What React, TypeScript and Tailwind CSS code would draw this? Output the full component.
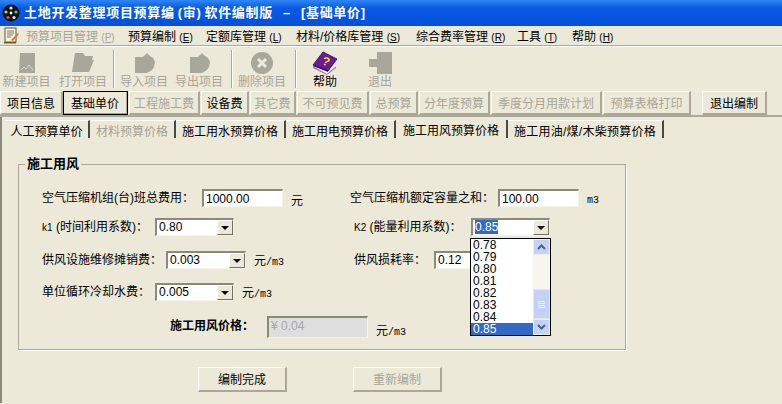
const CJK = "font-['Liberation_Sans','Noto_Sans_CJK_SC',sans-serif]";

const MENUS = [
  { label: "预算编制", key: "E", cls: "w-[78px]" },
  { label: "定额库管理", key: "L", cls: "w-[90px]" },
  { label: "材料/价格库管理", key: "S", cls: "w-[120px]" },
  { label: "综合费率管理", key: "R", cls: "w-[101px]" },
  { label: "工具", key: "T", cls: "w-[55px]" },
  { label: "帮助", key: "H", cls: "w-[50px]" },
];

const ACTIONS = [
  { label: "项目信息", cls: "w-[63px]", on: true },
  { label: "基础单价", cls: "w-[65px]", on: true, current: true },
  { label: "工程施工费", cls: "w-[71px] ml-px" },
  { label: "设备费", cls: "w-[48px] ml-px", on: true },
  { label: "其它费", cls: "w-[46px] ml-px" },
  { label: "不可预见费", cls: "w-[72px] ml-px" },
  { label: "总预算", cls: "w-[48px] ml-px" },
  { label: "分年度预算", cls: "w-[71px] ml-px" },
  { label: "季度分月用款计划", cls: "w-[111px] ml-px" },
  { label: "预算表格打印", cls: "w-[88px] ml-px" },
  { label: "退出编制", cls: "w-[65px] ml-[11px]", on: true },
];

const TABS = [
  { label: "人工预算单价", cls: "w-[85px]" },
  { label: "材料预算价格", cls: "w-[86px] text-[#a5a294]" },
  { label: "施工用水预算价格", cls: "w-[110px]" },
  { label: "施工用电预算价格", cls: "w-[110px]" },
  { label: "施工用风预算价格", cls: "w-[112px]", active: true },
  { label: "施工用油/煤/木柴预算价格", cls: "w-[156px] tracking-[0.25px]" },
];

const DROP_VALUES = ["0.78", "0.79", "0.80", "0.81", "0.82", "0.83", "0.84", "0.85"];

function ToolIcon({ name }: { name: string }) {
  const grey = "#a9a69a";
  if (name === "new")
    return (
      <svg width="18" height="20" viewBox="0 0 18 20">
        <path d="M2 0h15v20H1z" fill={grey} />
        <path d="M3 17l3-3 2 2 3-4 4 5" stroke="#d8d5c8" fill="none" />
      </svg>
    );
  if (name === "open")
    return (
      <svg width="24" height="20" viewBox="0 0 24 20">
        <path d="M4 0h8l2 3h8l-1 4H7L2 19H1z" fill={grey} />
        <path d="M6 7h17l-5 12H1z" fill={grey} />
      </svg>
    );
  if (name === "in" || name === "out")
    return (
      <svg width="21" height="21" viewBox="0 0 21 21">
        <path d="M1 4h8l1-1 3-3 3 3 3 2 2 4-1 5-2 3-5 3H1z" fill={grey} />
      </svg>
    );
  if (name === "del")
    return (
      <svg width="22" height="22" viewBox="0 0 22 22">
        <circle cx="11" cy="11" r="11" fill={grey} />
        <path d="M7 7l8 8M15 7l-8 8" stroke="#ece9d8" strokeWidth="3" />
      </svg>
    );
  if (name === "help")
    return (
      <svg width="26" height="24" viewBox="0 0 26 24">
        <path d="M1 15l14 8 9-8v2l-9 7-14-7z" fill="#8a7fa0" />
        <path d="M1 15l14 7 9-7-1-1-8 6-13-6z" fill="#ffffff" />
        <path d="M1 14L11 1l14 7-9 12-13-5z" fill="#6b1a98" stroke="#2c0a50" strokeWidth="0.8" />
        <path d="M1 15l15 6 0-2-14-5z" fill="#3a0f60" />
        <text x="10.5" y="14" fontSize="12" fontWeight="bold" fill="#f4e020" fontFamily="Liberation Sans" transform="rotate(20 13 10)">?</text>
      </svg>
    );
  return (
    <svg width="25" height="24" viewBox="0 0 25 24">
      <path d="M9 1h15v22H9v-7H1V8h8z" fill={grey} />
    </svg>
  );
}

function ToolButton({ name, label, cls, on }: { name: string; label: string; cls: string; on?: boolean }) {
  return (
    <div className={`flex flex-col items-center h-full pt-[3px] ${cls}`}>
      <div className="h-[26px] flex items-center">
        <ToolIcon name={name} />
      </div>
      <span className={`text-xs leading-[14px] -mt-px ${on ? "text-black" : "text-[#a8a598]"}`}>{label}</span>
    </div>
  );
}

function Sep({ cls }: { cls?: string }) {
  return <div className={`w-0.5 h-[38px] mt-[3px] border-l border-[#aca899] border-r border-r-white ${cls ?? ""}`} />;
}

function RaisedButton({ label, cls, on, current }: { label: string; cls: string; on?: boolean; current?: boolean }) {
  return (
    <div
      className={`h-6 flex items-center justify-center pt-0.5 text-xs border-t border-l border-t-white border-l-white border-r-2 border-b-2 border-r-[#aca899] border-b-[#aca899] ${cls} ${
        on ? "text-black" : "text-[#a8a598]"
      } ${current ? "outline outline-1 -outline-offset-1 outline-black" : ""}`}
    >
      {label}
    </div>
  );
}

function Sunken({ value, cls, disabled }: { value: string; cls: string; disabled?: boolean }) {
  return (
    <div
      className={`flex pl-0.5 pt-px text-xs leading-[15px] border-t-2 border-l-2 border-t-[#8c897c] border-l-[#8c897c] border-r border-b border-r-[#f5f3ea] border-b-[#f5f3ea] ${cls} ${
        disabled ? "bg-[#dedede] text-[#a8a8a8]" : "bg-white text-black"
      }`}
    >
      {value}
    </div>
  );
}

function Combo({ value, cls, selected }: { value: string; cls: string; selected?: boolean }) {
  return (
    <div className={`h-[18px] flex items-stretch bg-white border-t-2 border-l-2 border-t-[#8c897c] border-l-[#8c897c] border-r border-b border-r-[#f5f3ea] border-b-[#f5f3ea] ${cls}`}>
      <div className="flex-1 pl-0.5 text-xs leading-[15px]">
        <span className={selected ? "bg-[#316ac5] text-white" : "text-black"}>{value}</span>
      </div>
      <div className="w-4 flex items-center justify-center bg-[#ece9d8] border-t border-l border-t-white border-l-white border-r border-b border-r-[#716f64] border-b-[#716f64]">
        <div className="w-0 h-0 border-x-[4px] border-x-transparent border-t-[4px] border-t-black" />
      </div>
    </div>
  );
}

function ScrollBtn({ up }: { up?: boolean }) {
  return (
    <div className="h-4 bg-[#c4d2f8] border border-[#e8eefc] flex items-center justify-center">
      <svg width="9" height="6" viewBox="0 0 9 6">
        <path d={up ? "M1 5l3.5-3.5L8 5" : "M1 1l3.5 3.5L8 1"} fill="none" stroke="#4d6185" strokeWidth="2" />
      </svg>
    </div>
  );
}

function DropList() {
  return (
    <div className="absolute left-[-1px] top-[20px] z-10 w-[81px] h-[98px] bg-white border border-black flex">
      <div className="flex-1">
        {DROP_VALUES.map((v) => (
          <div
            key={v}
            className={`h-3 text-xs leading-3 pl-0.5 ${v === "0.85" ? "bg-[#316ac5] text-white" : "text-black"}`}
          >
            {v}
          </div>
        ))}
      </div>
      <div className="w-[17px] bg-[#f6f5ee] flex flex-col">
        <ScrollBtn up />
        <div className="flex-1 flex flex-col justify-end">
          <div className="h-[30px] bg-[#c4d2f8] border border-[#dfe6fb] flex flex-col items-center justify-center gap-px">
            <div className="w-[7px] h-px bg-[#eef2fe]" />
            <div className="w-[7px] h-px bg-[#eef2fe]" />
            <div className="w-[7px] h-px bg-[#eef2fe]" />
            <div className="w-[7px] h-px bg-[#eef2fe]" />
          </div>
        </div>
        <ScrollBtn />
      </div>
    </div>
  );
}

function Unit({ cjk, rest, cls }: { cjk?: string; rest?: string; cls: string }) {
  return (
    <span className={`leading-none whitespace-nowrap ${cls}`}>
      {cjk && <span className="text-xs">{cjk}</span>}
      {rest && <span className="text-[10px] font-['Liberation_Mono',monospace]">{rest}</span>}
    </span>
  );
}

export default function App() {
  return (
    <div className={`w-[782px] h-[404px] overflow-hidden bg-[#ece9d8] text-black ${CJK}`}>
      <div className="h-[26px] flex items-center bg-gradient-to-b from-[#2f86f5] via-[#0a5ae6] via-30% to-[#0450d8] pl-0.5">
        <svg width="18" height="18" viewBox="0 0 18 18">
          <circle cx="9" cy="9" r="8.5" fill="#10141c" />
          <circle cx="9" cy="4" r="1.6" fill="#e8e4c0" />
          <circle cx="14" cy="8" r="1.6" fill="#5ccf6a" />
          <circle cx="12" cy="13.5" r="1.6" fill="#e8e4c0" />
          <circle cx="6" cy="13.5" r="1.6" fill="#e05050" />
          <circle cx="4" cy="8" r="1.6" fill="#e8c040" />
          <circle cx="9" cy="9" r="1.4" fill="#ffffff" />
        </svg>
        <span className="ml-1 text-[13px] font-bold text-white tracking-[0.7px] whitespace-nowrap">
          土地开发整理项目预算编<span className="mx-[3px]">(审)</span>软件编制版
          <span className="ml-[10px]">–</span>
          <span className="ml-[10px]">[基础单价]</span>
        </span>
      </div>

      <div className="h-5 flex items-center pt-0.5 text-xs border-b border-b-[#aca899]">
        <svg className="ml-1 shrink-0 -mt-0.5" width="16" height="17" viewBox="0 0 16 17">
          <rect x="1" y="1" width="11" height="14" fill="#fbf6d8" stroke="#555" />
          <path d="M3 4h7M3 6h7M3 8h6M3 10h4" stroke="#777" />
          <path d="M7 13l7-7 1 1-6 7z" fill="#e07020" />
          <path d="M0 15h12v1.5H0z" fill="#7a5a20" />
        </svg>
        <span className="ml-1.5 w-[102px] text-[#a8a598] whitespace-nowrap">
          预算项目管理 <span className="text-[10px]">(<span className="underline">P</span>)</span>
        </span>
        {MENUS.map((m) => (
          <span key={m.key} className={`whitespace-nowrap ${m.cls}`}>
            {m.label} <span className="text-[10px]">(<span className="underline">{m.key}</span>)</span>
          </span>
        ))}
      </div>

      <div className="h-[44px] flex border-t border-t-white">
        <ToolButton name="new" label="新建项目" cls="w-[53px]" />
        <ToolButton name="open" label="打开项目" cls="w-[60px]" />
        <Sep />
        <ToolButton name="in" label="导入项目" cls="w-[56px] ml-px" />
        <ToolButton name="out" label="导出项目" cls="w-[54px]" />
        <Sep cls="ml-[5px]" />
        <ToolButton name="del" label="删除项目" cls="w-[58px]" />
        <Sep cls="ml-1" />
        <ToolButton name="help" label="帮助" cls="w-[56px]" on />
        <ToolButton name="exit" label="退出" cls="w-[54px]" />
      </div>

      <div className="h-[27px] flex pt-px border-b-2 border-b-[#aca899]">
        {ACTIONS.map((a) => (
          <RaisedButton key={a.label} label={a.label} cls={a.cls} on={a.on} current={a.current} />
        ))}
      </div>

      <div className="relative h-[286px] border-l-2 border-l-[#8c897c]">
        <div className="h-[21px] flex pl-[3px] pt-[3px]">
          {TABS.map((t) => (
            <div
              key={t.label}
              className={`h-[18px] flex items-center justify-center pt-1 text-xs whitespace-nowrap ${t.cls} ${
                t.active ? "" : "border-t border-t-white"
              } border-r-2 border-r-[#4a4a44]`}
            >
              {t.label}
            </div>
          ))}
        </div>

        <div className="mt-[26px] ml-4 w-[608px] h-[186px] relative border border-[#aca899] shadow-[1px_1px_0_#fff]">
          <span className="absolute -top-[8px] left-[6px] px-0.5 bg-[#ece9d8] text-[13px] font-bold leading-[14px]">施工用风</span>

          <div className="flex h-[18px] mt-[24px]">
            <div className="w-[331px] flex items-center pl-[23px]">
              <span className="text-xs w-[160px] whitespace-nowrap">空气压缩机组(台)班总费用：</span>
              <Sunken value="1000.00" cls="w-[81px] h-[18px]" />
              <Unit cjk="元" cls="ml-2 mt-1" />
            </div>
            <div className="flex items-center">
              <span className="text-xs w-[148px] whitespace-nowrap">空气压缩机额定容量之和：</span>
              <Sunken value="100.00" cls="w-[81px] h-[18px]" />
              <Unit rest="m3" cls="ml-2" />
            </div>
          </div>

          <div className="flex mt-[11px] h-[18px]">
            <div className="w-[335px] flex items-center pl-[23px]">
              <span className="text-xs w-[113px] whitespace-nowrap">
                <span className="text-[10px]">k1</span> (时间利用系数)：
              </span>
              <Combo value="0.80" cls="w-[79px]" />
            </div>
            <div className="flex items-center">
              <span className="text-xs w-[117px] whitespace-nowrap">
                <span className="text-[10px]">K2</span> (能量利用系数)：
              </span>
              <div className="relative">
                <Combo value="0.85" cls="w-[79px]" selected />
                <DropList />
              </div>
            </div>
          </div>

          <div className="flex mt-[15px] h-[18px]">
            <div className="w-[335px] flex items-center pl-[23px]">
              <span className="text-xs w-[124px] whitespace-nowrap">供风设施维修摊销费：</span>
              <Combo value="0.003" cls="w-[80px]" />
              <Unit cjk="元" rest="/m3" cls="ml-2" />
            </div>
            <div className="flex items-center">
              <span className="text-xs w-[80px] whitespace-nowrap">供风损耗率：</span>
              <Combo value="0.12" cls="w-[79px]" />
            </div>
          </div>

          <div className="flex items-center mt-[14px] h-[18px] pl-[23px]">
            <span className="text-xs w-[113px] whitespace-nowrap">单位循环冷却水费：</span>
            <Combo value="0.005" cls="w-[79px]" />
            <Unit cjk="元" rest="/m3" cls="ml-2" />
          </div>

          <div className="flex items-center mt-[13px] pl-[151px]">
            <span className="text-xs font-bold w-[97px] whitespace-nowrap -mt-0.5">施工用风价格：</span>
            <Sunken value="¥ 0.04" cls="w-[101px] h-[22px]" disabled />
            <Unit cjk="元" rest="/m3" cls="ml-2 mt-2" />
          </div>
        </div>

        <div className="flex mt-[17px] ml-[196px] gap-[66px]">
          <RaisedButton label="编制完成" cls="w-[89px] !h-[25px]" on />
          <RaisedButton label="重新编制" cls="w-[89px] !h-[25px]" />
        </div>
      </div>
    </div>
  );
}
